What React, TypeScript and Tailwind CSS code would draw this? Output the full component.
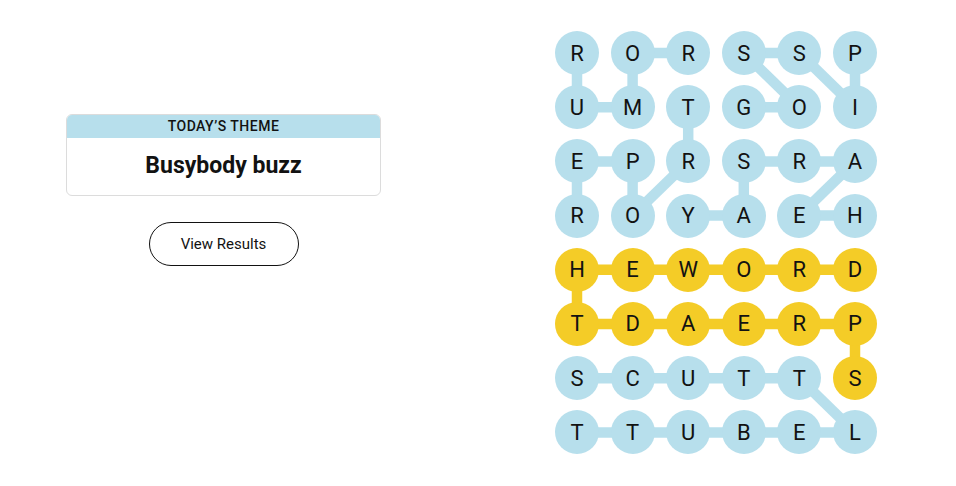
import React from 'react';

const ROWS = [
  'RORSSP',
  'UMTGOI',
  'EPRSRA',
  'ROYAEH',
  'HEWORD',
  'TDAERP',
  'SCUTTS',
  'TTUBEL',
];

// cells that belong to the spangram
const yellow = (r: number, c: number) => r === 4 || r === 5 || (r === 6 && c === 5);

type Link = [number, number, number, number, boolean];

const links: Link[] = [
  // RUMOR
  [0, 0, 1, 0, false],
  [1, 0, 1, 1, false],
  [1, 1, 0, 1, false],
  [0, 1, 0, 2, false],
  // GOSSIP
  [1, 3, 1, 4, false],
  [1, 4, 0, 3, false],
  [0, 3, 0, 4, false],
  [0, 4, 1, 5, false],
  [1, 5, 0, 5, false],
  // REPORT
  [3, 0, 2, 0, false],
  [2, 0, 2, 1, false],
  [2, 1, 3, 1, false],
  [3, 1, 2, 2, false],
  [2, 2, 1, 2, false],
  // HEARSAY
  [3, 5, 3, 4, false],
  [3, 4, 2, 5, false],
  [2, 5, 2, 4, false],
  [2, 4, 2, 3, false],
  [2, 3, 3, 3, false],
  [3, 3, 3, 2, false],
  // SPREAD THE WORD
  [4, 0, 4, 1, true],
  [4, 1, 4, 2, true],
  [4, 2, 4, 3, true],
  [4, 3, 4, 4, true],
  [4, 4, 4, 5, true],
  [4, 0, 5, 0, true],
  [5, 0, 5, 1, true],
  [5, 1, 5, 2, true],
  [5, 2, 5, 3, true],
  [5, 3, 5, 4, true],
  [5, 4, 5, 5, true],
  [5, 5, 6, 5, true],
  // SCUTTLEBUTT
  [6, 0, 6, 1, false],
  [6, 1, 6, 2, false],
  [6, 2, 6, 3, false],
  [6, 3, 6, 4, false],
  [6, 4, 7, 5, false],
  [7, 5, 7, 4, false],
  [7, 4, 7, 3, false],
  [7, 3, 7, 2, false],
  [7, 2, 7, 1, false],
  [7, 1, 7, 0, false],
];

const DX = 55.6;
const DY = 54.2;
const cx = (c: number) => 22 + c * DX;
const cy = (r: number) => 22 + r * DY;

const BLUE = '#b7dfec';
const GOLD = '#f4cc27';

const Board: React.FC = () => (
  <div className="relative">
    <svg className="absolute inset-0 z-0" width={322} height={424}>
      {links.map(([r1, c1, r2, c2, y], i) => (
        <line
          key={i}
          x1={cx(c1)}
          y1={cy(r1)}
          x2={cx(c2)}
          y2={cy(r2)}
          stroke={y ? GOLD : BLUE}
          strokeWidth={10.5}
        />
      ))}
    </svg>
    <div className="relative z-10 grid grid-cols-[repeat(6,44px)] gap-x-[11.6px] gap-y-[10.2px]">
      {ROWS.map((row, r) =>
        row.split('').map((ch, c) => (
          <div
            key={`${r}-${c}`}
            className={`w-[44px] h-[44px] rounded-full flex items-center justify-center text-[22px] text-[#121212] ${
              yellow(r, c) ? 'bg-[#f4cc27]' : 'bg-[#b7dfec]'
            }`}
          >
            {ch}
          </div>
        ))
      )}
    </div>
  </div>
);

export default function App() {
  return (
    <div className="w-[956px] h-[486px] bg-white flex pt-[31px] font-['Roboto',sans-serif] text-[#121212]">
      <div className="ml-[66px] mt-[83px] w-[315px] flex flex-col items-center">
        <div className="w-full rounded-[6px] border border-[#dcdcdc] overflow-hidden">
          <div className="h-[23px] bg-[#b7dfec] flex items-center justify-center text-[14px] font-medium tracking-[0.5px] uppercase">
            Today’s Theme
          </div>
          <div className="h-[57px] flex items-center justify-center text-[23px] font-bold">
            Busybody buzz
          </div>
        </div>
        <button className="mt-[26px] w-[150px] h-[44px] rounded-full border border-[#121212] text-[15px] flex items-center justify-center">
          View Results
        </button>
      </div>
      <div className="ml-[174px]">
        <Board />
      </div>
    </div>
  );
}
